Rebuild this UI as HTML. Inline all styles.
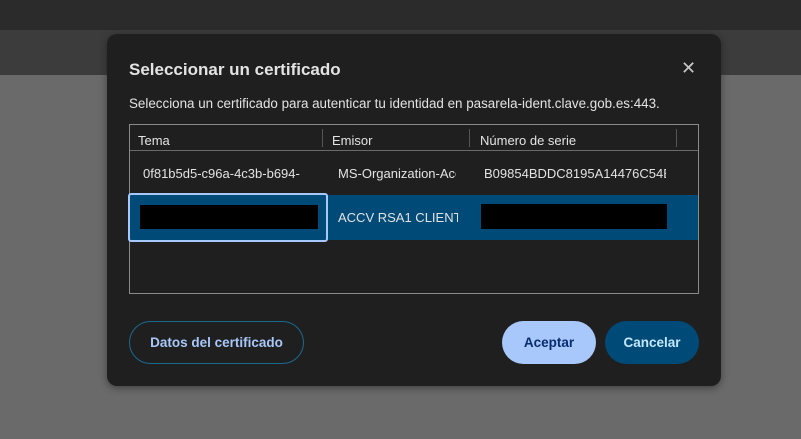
<!DOCTYPE html>
<html><head><style>
body{margin:0;width:801px;height:439px;background:#6a6a6a;position:relative;overflow:hidden;font-family:"Liberation Sans",sans-serif}
.a{position:absolute}
</style></head><body>
<div class="a" style="left:0;top:0;width:801px;height:30px;background:#2b2b2b"></div>
<div class="a" style="left:0;top:30px;width:801px;height:45px;background:#3c3c3c"></div>
<div class="a" style="left:107px;top:34px;width:614px;height:352px;background:#1f1f1f;border-radius:10px;box-shadow:0 2px 8px rgba(0,0,0,.4)"></div>
<div class="a" style="left:129px;top:60px;font-size:17px;font-weight:bold;color:#e3e3e3">Seleccionar un certificado</div>
<div class="a" style="left:681px;top:58px;font-size:18px;color:#c8c8c8">✕</div>
<div class="a" style="left:129px;top:96px;font-size:13.4px;color:#e3e3e3">Selecciona un certificado para autenticar tu identidad en pasarela-ident.clave.gob.es:443.</div>
<div class="a" style="left:129px;top:124px;width:568px;height:168px;border:1px solid #8a8a8a;background:#1f1f1f"></div>
<div class="a" style="left:130px;top:150px;width:568px;height:1px;background:#6a6a6a"></div>
<div class="a" style="left:322px;top:129px;width:1px;height:18px;background:#555"></div>
<div class="a" style="left:469px;top:129px;width:1px;height:18px;background:#555"></div>
<div class="a" style="left:676px;top:129px;width:1px;height:18px;background:#555"></div>
<div class="a" style="left:138px;top:133px;font-size:13px;color:#e3e3e3">Tema</div>
<div class="a" style="left:332px;top:133px;font-size:13px;color:#e3e3e3">Emisor</div>
<div class="a" style="left:480px;top:133px;font-size:13px;color:#e3e3e3">Número de serie</div>
<div class="a" style="left:143px;top:166px;font-size:13px;color:#e3e3e3;width:168px;overflow:hidden;white-space:nowrap">0f81b5d5-c96a-4c3b-b694-</div>
<div class="a" style="left:338px;top:166px;font-size:13px;color:#e3e3e3;width:118px;overflow:hidden;white-space:nowrap">MS-Organization-Access</div>
<div class="a" style="left:484px;top:166px;font-size:13px;color:#e3e3e3;width:182px;overflow:hidden;white-space:nowrap">B09854BDDC8195A14476C54B</div>
<div class="a" style="left:130px;top:195px;width:568px;height:45px;background:#004a77"></div>
<div class="a" style="left:128px;top:193px;width:196px;height:45px;border:2px solid #a8c7fa;border-radius:3px"></div>
<div class="a" style="left:140px;top:205px;width:178px;height:24px;background:#000"></div>
<div class="a" style="left:481px;top:204px;width:186px;height:25px;background:#000"></div>
<div class="a" style="left:338px;top:210px;font-size:13px;color:#e3e3e3;width:120px;overflow:hidden;white-space:nowrap">ACCV RSA1 CLIENTE</div>
<div class="a" style="left:129px;top:321px;width:173px;height:41px;border:1px solid #1a6a90;border-radius:22px;color:#a8c7fa;font-size:13.5px;font-weight:bold;display:flex;align-items:center;justify-content:center">Datos del certificado</div>
<div class="a" style="left:502px;top:321px;width:94px;height:43px;background:#a8c7fa;border-radius:22px;color:#062e6f;font-size:13.5px;font-weight:bold;display:flex;align-items:center;justify-content:center">Aceptar</div>
<div class="a" style="left:605px;top:321px;width:94px;height:43px;background:#004a77;border-radius:22px;color:#c2e7ff;font-size:13.5px;font-weight:bold;display:flex;align-items:center;justify-content:center">Cancelar</div>
</body></html>
